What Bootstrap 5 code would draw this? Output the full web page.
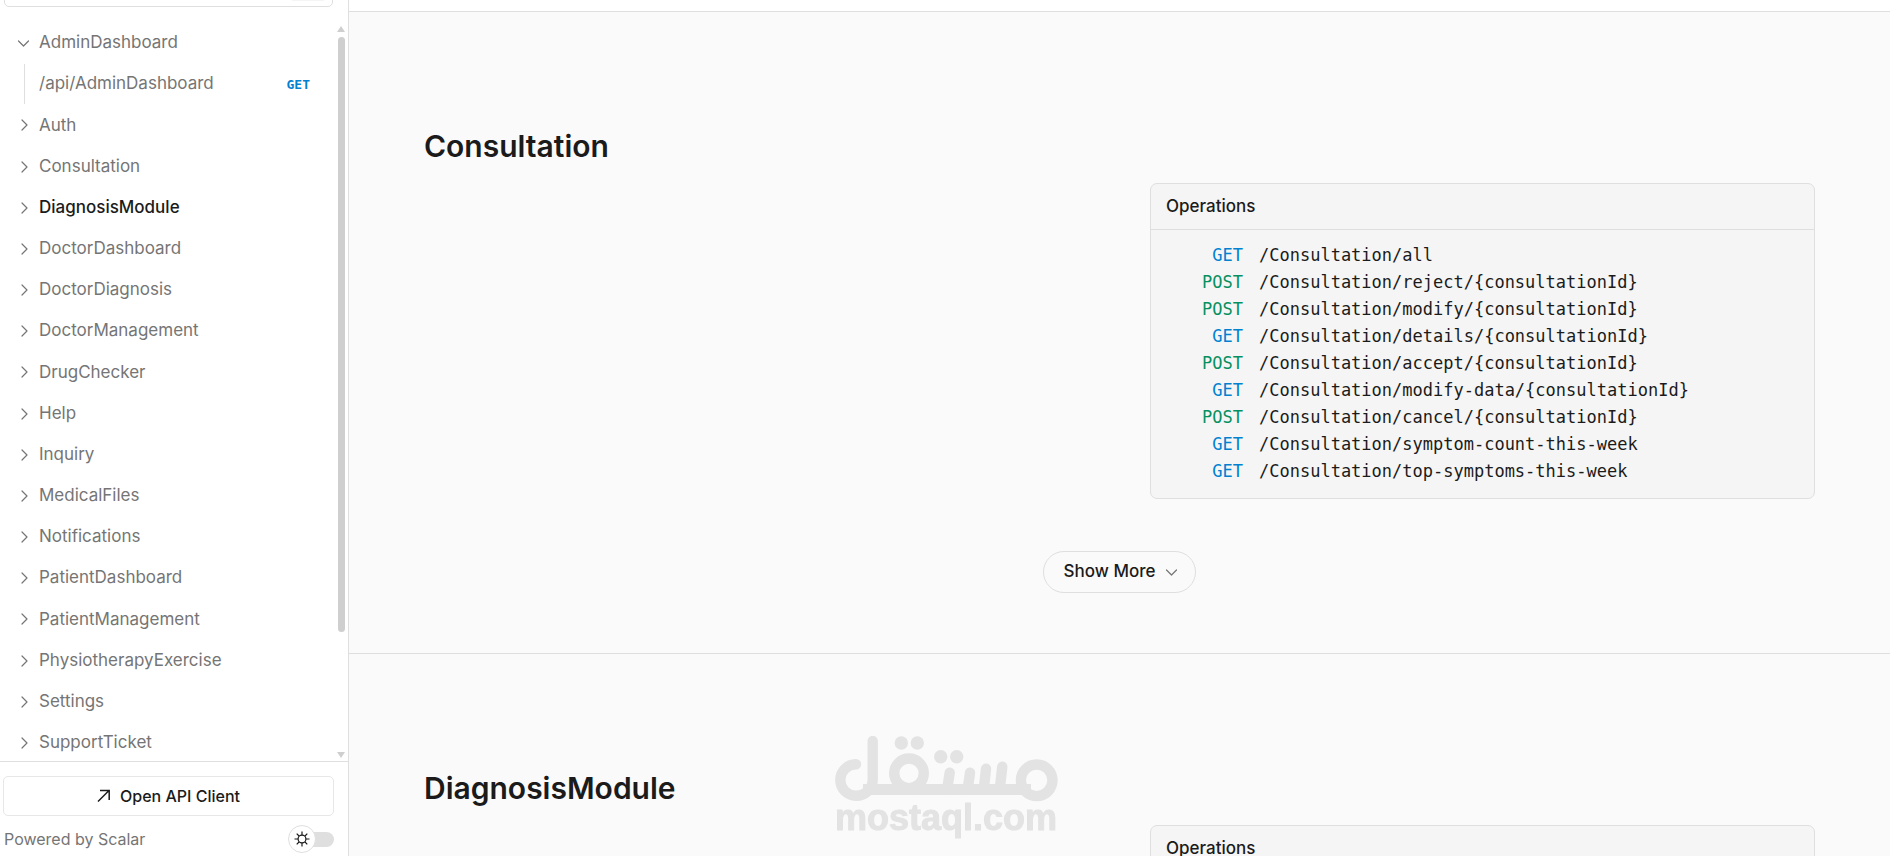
<!DOCTYPE html>
<html lang="en">
<head>
<meta charset="utf-8">
<meta name="viewport" content="width=device-width, initial-scale=1">
<title>API Reference</title>
<link href="https://cdn.jsdelivr.net/npm/bootstrap@5.3.0/dist/css/bootstrap.min.css" rel="stylesheet">
<style>
  :root { --line: #dfdfdf; --ink: #1b1b1b; --muted: #757575; --get: #0082d0; --post: #069061; }
  body { font-family: Inter, "Liberation Sans", sans-serif; font-size: 17px; color: var(--ink); background: #fff; }
  .sidebar { width: 349px; border-right: 1px solid var(--line); }
  .search { margin: -32px 15px 0 4px; }
  .search input { height: 39px; border: 1px solid var(--line); border-radius: 5px; box-shadow: none; }
  .search kbd { right: 7px; top: 8px; width: 36px; height: 25px; background: #f5f5f5; }
  .tree { margin-top: 18px; }
  .tree a { height: 36px; color: var(--muted); padding-left: 16px; gap: 7px; }
  .tree a svg { width: 16px; height: 16px; flex: none; }
  .tree a.current { color: var(--ink); font-weight: 500; }
  .tree a.current svg { color: var(--muted); }
  .tree a.child { position: relative; padding-left: 39px; padding-right: 25px; }
  .tree a.child::before { content: ""; position: absolute; left: 24px; top: -2px; bottom: -2px; border-left: 1px solid var(--line); }
  .verb { font: 700 13px "DejaVu Sans Mono", monospace; color: var(--get); }
  .scroller { width: 12px; margin: 14px 1px 0 0; padding: 5px 0 3px; gap: 5px; color: #cfcfcf; }
  .thumb { width: 7px; flex: 595 1 0; background: #cfcfcf; border-radius: 4px; }
  .rest { flex: 110 1 0; }
  .side-foot { border-top: 1px solid var(--line); height: 95px; padding: 14px 14px 0 3px; }
  .client { height: 40px; border: 1px solid #e7e7e7; border-radius: 5px; font-size: 16px; font-weight: 500; color: var(--ink); gap: 9px; }
  .powered { font-size: 16px; color: var(--muted); margin-top: 8px; padding-left: 1px; height: 30px; }
  .theme { width: 46px; height: 28px; position: relative; display: flex; align-items: center; justify-content: flex-end; }
  .theme input { appearance: none; margin: 0; width: 34px; height: 15px; border-radius: 8px; background: #dfdfdf; }
  .theme span { position: absolute; left: 0; top: 0; width: 28px; height: 28px; border: 1px solid var(--line); border-radius: 50%; background: #fff; display: grid; place-items: center; }
  .page { margin-right: 3px; }
  .page header { height: 12px; border-bottom: 1px solid var(--line); flex: none; }
  .group { background: #fafafa; padding: 112px 75px 60px; border-bottom: 1px solid var(--line); }
  .group h2 { font-size: 30px; line-height: 44px; font-weight: 600; margin: 0 0 15px; }
  .halves { display: grid; grid-template-columns: 1fr 1fr; column-gap: 61px; }
  .ops { grid-column: 2; border: 1px solid var(--line); border-radius: 7px; background: #f5f5f5; }
  .ops h3 { font-size: 17px; font-weight: 500; line-height: 45px; margin: 0; padding: 0 15px; border-bottom: 1px solid var(--line); }
  .ops ul { padding: 12px 0 13px 16px; font: 17px/27px "DejaVu Sans Mono", monospace; }
  .ops a { color: var(--ink); gap: 16px; }
  .ops a span:first-child { width: 76px; text-align: right; }
  .ops .get { color: var(--get); } .ops .post { color: var(--post); }
  .more { height: 42px; border: 1px solid var(--line); border-radius: 21px; font-size: 17px; font-weight: 500; color: var(--ink); padding: 0 15px 0 20px; gap: 9px; margin: 52px auto 0; }
  .more svg { color: var(--muted); }
  .watermark { bottom: 0; pointer-events: none; }
</style>
</head>
<body>
<svg class="d-none">
  <symbol id="right" viewBox="0 0 16 16"><path d="M6 3l5 5-5 5" fill="none" stroke="currentColor" stroke-width="1.2" stroke-linecap="round" stroke-linejoin="round"/></symbol>
  <symbol id="down" viewBox="0 0 16 16"><path d="M2.500 6l5 5 5-5" fill="none" stroke="currentColor" stroke-width="1.200" stroke-linecap="round" stroke-linejoin="round"/></symbol>
</svg>
<div class="d-flex vh-100 overflow-hidden">
  <aside class="sidebar d-flex flex-column flex-shrink-0">
    <div class="search position-relative">
      <input class="form-control" type="search" aria-label="Search">
      <kbd class="position-absolute"></kbd>
    </div>
    <div class="d-flex flex-grow-1 overflow-hidden">
      <nav class="tree d-flex flex-column justify-content-between flex-grow-1" aria-label="API groups">
        <a class="d-flex align-items-center text-decoration-none" href="#"><svg><use href="#down"/></svg>AdminDashboard</a>
        <a class="child d-flex align-items-center justify-content-between text-decoration-none" href="#">/api/AdminDashboard <span class="verb">GET</span></a>
        <a class="d-flex align-items-center text-decoration-none" href="#"><svg><use href="#right"/></svg>Auth</a>
        <a class="d-flex align-items-center text-decoration-none" href="#"><svg><use href="#right"/></svg>Consultation</a>
        <a class="current d-flex align-items-center text-decoration-none" href="#"><svg><use href="#right"/></svg>DiagnosisModule</a>
        <a class="d-flex align-items-center text-decoration-none" href="#"><svg><use href="#right"/></svg>DoctorDashboard</a>
        <a class="d-flex align-items-center text-decoration-none" href="#"><svg><use href="#right"/></svg>DoctorDiagnosis</a>
        <a class="d-flex align-items-center text-decoration-none" href="#"><svg><use href="#right"/></svg>DoctorManagement</a>
        <a class="d-flex align-items-center text-decoration-none" href="#"><svg><use href="#right"/></svg>DrugChecker</a>
        <a class="d-flex align-items-center text-decoration-none" href="#"><svg><use href="#right"/></svg>Help</a>
        <a class="d-flex align-items-center text-decoration-none" href="#"><svg><use href="#right"/></svg>Inquiry</a>
        <a class="d-flex align-items-center text-decoration-none" href="#"><svg><use href="#right"/></svg>MedicalFiles</a>
        <a class="d-flex align-items-center text-decoration-none" href="#"><svg><use href="#right"/></svg>Notifications</a>
        <a class="d-flex align-items-center text-decoration-none" href="#"><svg><use href="#right"/></svg>PatientDashboard</a>
        <a class="d-flex align-items-center text-decoration-none" href="#"><svg><use href="#right"/></svg>PatientManagement</a>
        <a class="d-flex align-items-center text-decoration-none" href="#"><svg><use href="#right"/></svg>PhysiotherapyExercise</a>
        <a class="d-flex align-items-center text-decoration-none" href="#"><svg><use href="#right"/></svg>Settings</a>
        <a class="d-flex align-items-center text-decoration-none" href="#"><svg><use href="#right"/></svg>SupportTicket</a>
      </nav>
      <div class="scroller d-flex flex-column align-items-center" aria-hidden="true">
        <svg width="8" height="6"><path d="M4 0l4 6H0z" fill="currentColor"/></svg>
        <div class="thumb"></div>
        <div class="rest"></div>
        <svg width="8" height="6"><path d="M0 0h8L4 6z" fill="currentColor"/></svg>
      </div>
    </div>
    <div class="side-foot">
      <button class="client btn w-100 d-flex align-items-center justify-content-center p-0" type="button">
        <svg width="14" height="14" viewBox="0 0 14 14" fill="none" stroke="currentColor" stroke-width="1.500"><path d="M1 12.500L12 1.500M3 1.500h9.200v9.500"/></svg>
        Open API Client
      </button>
      <div class="powered d-flex align-items-center justify-content-between">
        <a class="text-reset text-decoration-none" href="#">Powered by Scalar</a>
        <label class="theme" aria-label="Dark mode">
          <input type="checkbox" role="switch">
          <span><svg width="16" height="16" viewBox="0 0 16 16" fill="none" stroke="#1b1b1b" stroke-width="1.200"><circle cx="8" cy="8" r="3.900"/><path d="M8 .5v3.500M8 12v3.500M.5 8H4M12 8h3.500M2.700 2.700l2.300 2.300M11 11l2.300 2.300M13.300 2.700L11 5M5 11l-2.300 2.300"/></svg></span>
        </label>
      </div>
    </div>
  </aside>

  <main class="page d-flex flex-column flex-grow-1 overflow-hidden">
    <header></header>
    <section class="group d-flex flex-column flex-shrink-0">
      <h2>Consultation</h2>
      <div class="halves">
        <div class="ops">
          <h3>Operations</h3>
          <ul class="list-unstyled m-0">
            <li><a class="d-flex text-decoration-none" href="#"><span class="get">GET</span><span>/Consultation/all</span></a></li>
            <li><a class="d-flex text-decoration-none" href="#"><span class="post">POST</span><span>/Consultation/reject/{consultationId}</span></a></li>
            <li><a class="d-flex text-decoration-none" href="#"><span class="post">POST</span><span>/Consultation/modify/{consultationId}</span></a></li>
            <li><a class="d-flex text-decoration-none" href="#"><span class="get">GET</span><span>/Consultation/details/{consultationId}</span></a></li>
            <li><a class="d-flex text-decoration-none" href="#"><span class="post">POST</span><span>/Consultation/accept/{consultationId}</span></a></li>
            <li><a class="d-flex text-decoration-none" href="#"><span class="get">GET</span><span>/Consultation/modify-data/{consultationId}</span></a></li>
            <li><a class="d-flex text-decoration-none" href="#"><span class="post">POST</span><span>/Consultation/cancel/{consultationId}</span></a></li>
            <li><a class="d-flex text-decoration-none" href="#"><span class="get">GET</span><span>/Consultation/symptom-count-this-week</span></a></li>
            <li><a class="d-flex text-decoration-none" href="#"><span class="get">GET</span><span>/Consultation/top-symptoms-this-week</span></a></li>
          </ul>
        </div>
      </div>
      <button class="more btn d-flex align-items-center" type="button">Show More <svg width="16" height="16"><use href="#down"/></svg></button>
    </section>
    <section class="group d-flex flex-column flex-shrink-0">
      <h2>DiagnosisModule</h2>
      <div class="halves">
        <div class="ops"><h3>Operations</h3></div>
      </div>
    </section>
  </main>
</div>
<svg class="watermark position-fixed start-50 translate-middle-x" width="224" height="120" viewBox="0 0 224 120" role="img" aria-label="mostaql.com">
  <g fill="none" stroke="#e3e3e3" stroke-width="10.400" stroke-linecap="round">
    <path d="M21 28.300A15.700 15.700 0 1 0 21 59.700A16.700 15.700 0 0 0 37.700 44V5"/>
    <path d="M28 53.500H196" stroke-width="11" stroke-linecap="butt"/>
    <circle cx="74" cy="37.300" r="14.800"/>
    <circle cx="201.700" cy="44.300" r="15.800"/>
    <path d="M114.700 36.700L112.500 51M135 36.700L133 51M151 32.700L149 51M167.300 30.700L165 51"/>
  </g>
  <g fill="#e3e3e3">
    <circle cx="66.300" cy="7" r="6.700"/><circle cx="82.300" cy="7" r="6.700"/>
    <circle cx="105.700" cy="20.700" r="6.700"/><circle cx="121.700" cy="20.700" r="6.700"/>
    <text x="0" y="94" font-family="Liberation Sans, sans-serif" font-weight="700" font-size="36" stroke="#e3e3e3" stroke-width="1" stroke-linejoin="round">mostaql.com</text>
  </g>
</svg>
<script src="https://cdn.jsdelivr.net/npm/bootstrap@5.3.0/dist/js/bootstrap.bundle.min.js"></script>
</body>
</html>
